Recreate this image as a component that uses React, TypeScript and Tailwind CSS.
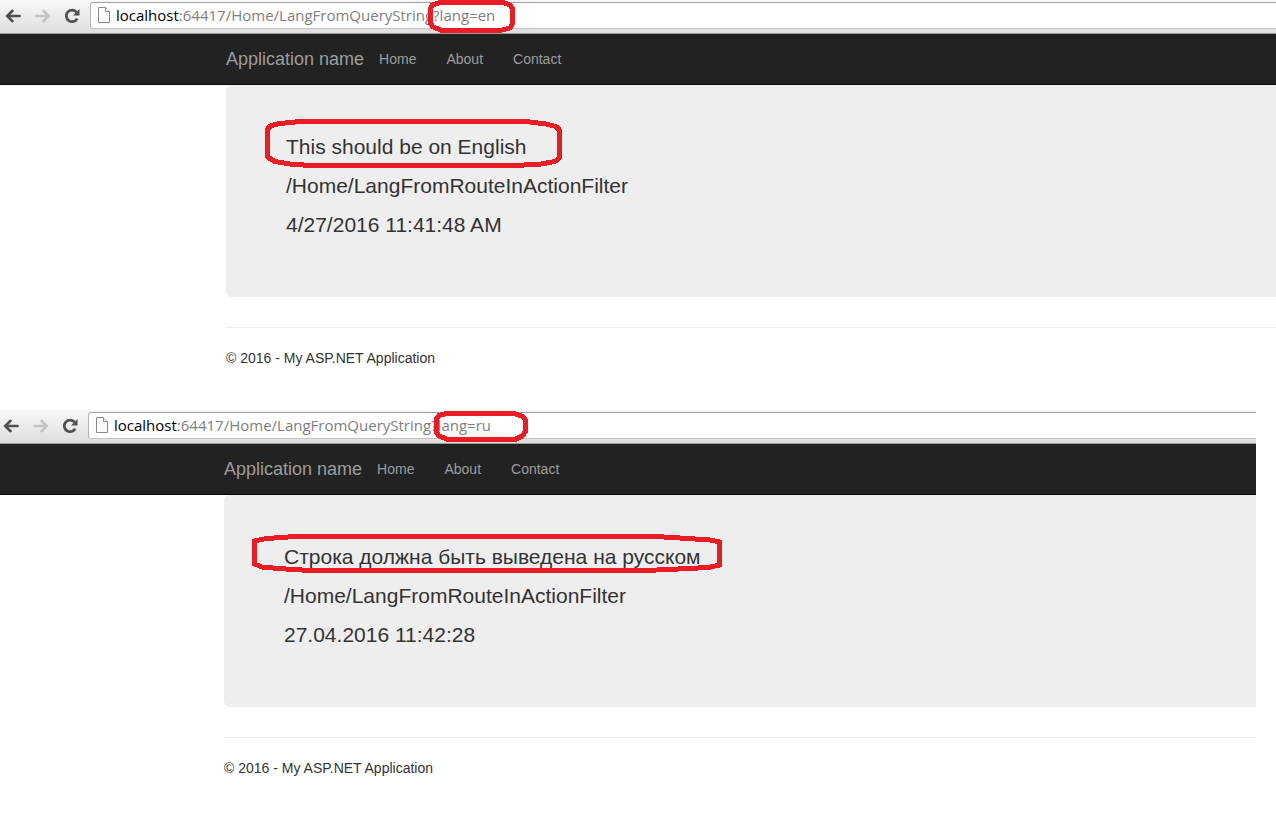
type Capture = {
  id: string;
  query: string;
  lines: string[];
  marks: string[];
  className: string;
};

const captures: Capture[] = [
  {
    id: "en",
    query: "?lang=en",
    lines: ["This should be on English", "/Home/LangFromRouteInActionFilter", "4/27/2016 11:41:48 AM"],
    marks: [
      "M430.5 9 L432 5 L440 2.5 H503 L510 5 L512.5 9 V24 L510 28 L500 30.5 H442 L433 27 L430.5 23 Z",
      "M267.5 129 L271 125.5 L280 123.5 L300 121.5 H526 L546 124 L556 126.5 L559.5 130 V158 L555 161.5 L541 164 L516 165.5 H310 L290 164 L275 161.5 L267.5 157 Z",
    ],
    className: "",
  },
  {
    id: "ru",
    query: "?lang=ru",
    lines: ["Строка должна быть выведена на русском", "/Home/LangFromRouteInActionFilter", "27.04.2016 11:42:28"],
    marks: [
      "M438.5 9 L441 5.5 L448 3.5 H516 L524 6 L527.5 10 V21 L525 25.5 L517 29.5 H450 L441 26 L438.5 22 Z",
      "M256.5 131 L266 129 L281 127.5 L300 126.5 H658 L690 128.5 L712 130 L721.5 132 V155 L710 157.5 L680 159 L648 160.5 H312 L280 158.5 L264 157 L256.5 154 Z",
    ],
    // this window was cropped slightly tighter
    className: "-ml-0.5 mr-5",
  },
];

function ArrowIcon({ className = "" }: { className?: string }) {
  return (
    <svg className={className} width="16" height="14" viewBox="0 0 16 14" fill="none" stroke="currentColor" strokeWidth="2.6">
      <path d="M7.5 1.8 L2.2 7 L7.5 12.2 M2.2 7 H14.6" strokeLinecap="round" strokeLinejoin="miter" />
    </svg>
  );
}

function ReloadIcon() {
  return (
    <svg width="16" height="16" viewBox="1 0 16 16" fill="none">
      <path d="M12.6 4.2 A5.8 5.8 0 1 0 13.2 10.6" stroke="#505050" strokeWidth="2.8" />
      <path d="M15.5 1 V7.5 H9 Z" fill="#505050" />
    </svg>
  );
}

function PageIcon() {
  return (
    <svg className="shrink-0" width="12" height="16" viewBox="0 0 12 16" fill="#fbfbfb" stroke="#8a8a8a">
      <path d="M0.5 0.5 H7.5 L11.5 4.5 V15.5 H0.5 Z" />
      <path d="M7.5 0.5 V4.5 H11.5" />
    </svg>
  );
}

function Toolbar({ id, query }: { id: string; query: string }) {
  return (
    <div className="flex h-[34px] items-start border-b border-[#9c9f9c] bg-gradient-to-b from-[#f8f8f8] to-[#dedede] pt-0.5">
      <div className="flex h-[27px] w-[90px] shrink-0 items-center gap-3.5 pl-[5px]">
        <button type="button" aria-label="Back" className="text-[#505050]">
          <ArrowIcon />
        </button>
        <button type="button" aria-label="Forward" className="text-[#c4c4c4]">
          <ArrowIcon className="-scale-x-100" />
        </button>
        <button type="button" aria-label="Reload">
          <ReloadIcon />
        </button>
      </div>
      <div className="flex h-[27px] min-w-0 flex-1 items-center rounded-l-[3px] border-y border-l border-t-[#a2a2a2] border-b-[#c4c4c4] border-l-[#b4b4b4] bg-white pb-0.5 pl-[7px] font-['Open_Sans',sans-serif] text-[15px] leading-5">
        <PageIcon />
        <label htmlFor={`url-${id}`} className="ml-1.5 text-black">
          localhost
        </label>
        <input
          id={`url-${id}`}
          type="text"
          defaultValue={`:64417/Home/LangFromQueryString${query}`}
          className="min-w-0 flex-1 bg-transparent text-[#808080] outline-none"
        />
      </div>
    </div>
  );
}

function BrowserWindow({ id, query, lines, marks, className }: Capture) {
  return (
    <section className={`relative pb-[42px] ${className}`}>
      <Toolbar id={id} query={query} />

      <nav className="flex h-[51px] items-center border-b border-[#080808] bg-[#222] pl-[226px] text-sm text-[#9d9d9d]">
        <a href="#" className="mr-[15px] text-lg">Application name</a>
        <div className="flex gap-[30px]">
          <a href="#">Home</a>
          <a href="#">About</a>
          <a href="#">Contact</a>
        </div>
      </nav>

      <main className="pl-[226px]">
        <div className="flex flex-col gap-[11px] rounded-l-md bg-[#eee] pt-12 pb-[58px] pl-[60px] text-[21px] leading-7">
          {lines.map((line) => (
            <p key={line}>{line}</p>
          ))}
        </div>
        <hr className="my-[30px] mb-5 border-[#eee]" />
        <footer className="text-sm">
          <p>© 2016 - My ASP.NET Application</p>
        </footer>
      </main>

      {/* Red marker outlines */}
      <svg className="pointer-events-none absolute inset-0 h-full w-full" fill="none" stroke="#ed1c24" strokeWidth="5" strokeLinejoin="round" shapeRendering="crispEdges">
        {marks.map((d) => (
          <path key={d} d={d} />
        ))}
      </svg>
    </section>
  );
}

export default function App() {
  return (
    <div className="min-h-screen overflow-x-hidden bg-white font-['Liberation_Sans',Arial,sans-serif] text-[#333]">
      {captures.map((capture) => (
        <BrowserWindow key={capture.id} {...capture} />
      ))}
    </div>
  );
}
